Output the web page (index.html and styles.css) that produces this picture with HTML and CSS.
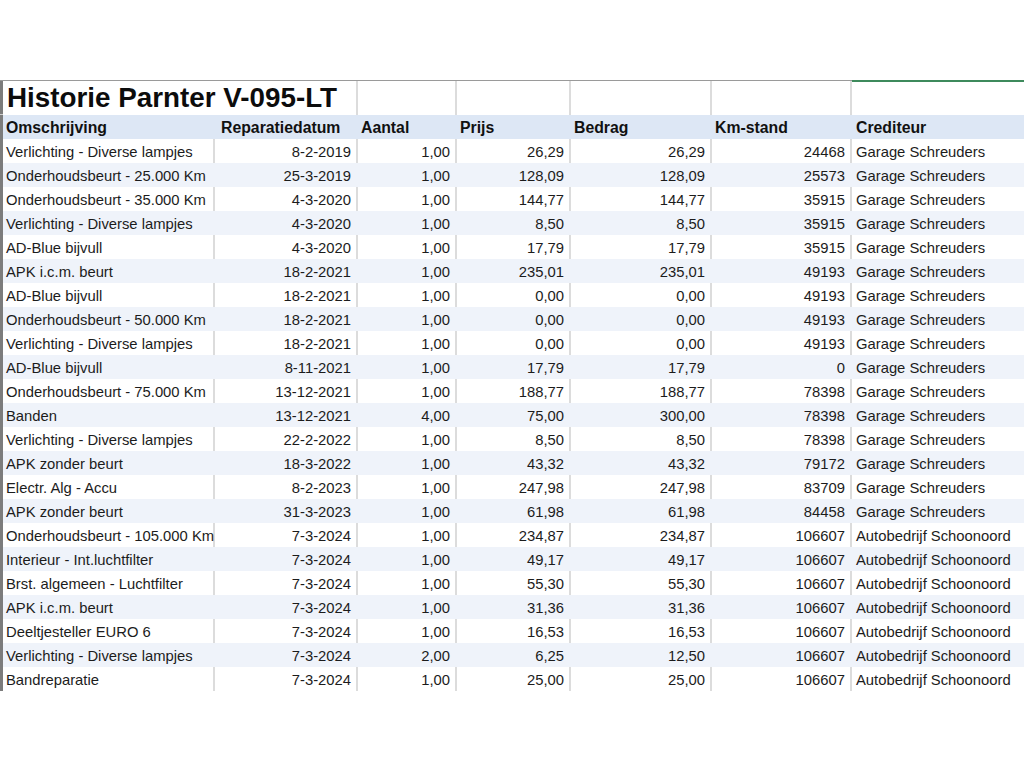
FILE: index.html
```html
<!DOCTYPE html>
<html lang="nl">
<head>
<meta charset="utf-8">
<title>Historie Parnter V-095-LT</title>
<link rel="stylesheet" href="styles.css">
</head>
<body>
<div class="sheet">
  <div class="row title-row">
    <div class="rh"></div>
    <div class="c title">Historie Parnter V-095-LT</div>
    <div class="c"></div><div class="c"></div><div class="c"></div><div class="c"></div><div class="c last"></div>
  </div>
  <div class="row head">
    <div class="rh"></div>
    <div class="c">Omschrijving</div>
    <div class="c hb">Reparatiedatum</div>
    <div class="c">Aantal</div>
    <div class="c">Prijs</div>
    <div class="c">Bedrag</div>
    <div class="c">Km-stand</div>
    <div class="c last">Crediteur</div>
  </div>
  <div class="row"><div class="rh"></div><div class="c">Verlichting - Diverse lampjes</div><div class="c n">8-2-2019</div><div class="c n">1,00</div><div class="c n">26,29</div><div class="c n">26,29</div><div class="c n">24468</div><div class="c last">Garage Schreuders</div></div>
  <div class="row alt"><div class="rh"></div><div class="c">Onderhoudsbeurt - 25.000 Km</div><div class="c n">25-3-2019</div><div class="c n">1,00</div><div class="c n">128,09</div><div class="c n">128,09</div><div class="c n">25573</div><div class="c last">Garage Schreuders</div></div>
  <div class="row"><div class="rh"></div><div class="c">Onderhoudsbeurt - 35.000 Km</div><div class="c n">4-3-2020</div><div class="c n">1,00</div><div class="c n">144,77</div><div class="c n">144,77</div><div class="c n">35915</div><div class="c last">Garage Schreuders</div></div>
  <div class="row alt"><div class="rh"></div><div class="c">Verlichting - Diverse lampjes</div><div class="c n">4-3-2020</div><div class="c n">1,00</div><div class="c n">8,50</div><div class="c n">8,50</div><div class="c n">35915</div><div class="c last">Garage Schreuders</div></div>
  <div class="row"><div class="rh"></div><div class="c">AD-Blue bijvull</div><div class="c n">4-3-2020</div><div class="c n">1,00</div><div class="c n">17,79</div><div class="c n">17,79</div><div class="c n">35915</div><div class="c last">Garage Schreuders</div></div>
  <div class="row alt"><div class="rh"></div><div class="c">APK i.c.m. beurt</div><div class="c n">18-2-2021</div><div class="c n">1,00</div><div class="c n">235,01</div><div class="c n">235,01</div><div class="c n">49193</div><div class="c last">Garage Schreuders</div></div>
  <div class="row"><div class="rh"></div><div class="c">AD-Blue bijvull</div><div class="c n">18-2-2021</div><div class="c n">1,00</div><div class="c n">0,00</div><div class="c n">0,00</div><div class="c n">49193</div><div class="c last">Garage Schreuders</div></div>
  <div class="row alt"><div class="rh"></div><div class="c">Onderhoudsbeurt - 50.000 Km</div><div class="c n">18-2-2021</div><div class="c n">1,00</div><div class="c n">0,00</div><div class="c n">0,00</div><div class="c n">49193</div><div class="c last">Garage Schreuders</div></div>
  <div class="row"><div class="rh"></div><div class="c">Verlichting - Diverse lampjes</div><div class="c n">18-2-2021</div><div class="c n">1,00</div><div class="c n">0,00</div><div class="c n">0,00</div><div class="c n">49193</div><div class="c last">Garage Schreuders</div></div>
  <div class="row alt"><div class="rh"></div><div class="c">AD-Blue bijvull</div><div class="c n">8-11-2021</div><div class="c n">1,00</div><div class="c n">17,79</div><div class="c n">17,79</div><div class="c n">0</div><div class="c last">Garage Schreuders</div></div>
  <div class="row"><div class="rh"></div><div class="c">Onderhoudsbeurt - 75.000 Km</div><div class="c n">13-12-2021</div><div class="c n">1,00</div><div class="c n">188,77</div><div class="c n">188,77</div><div class="c n">78398</div><div class="c last">Garage Schreuders</div></div>
  <div class="row alt"><div class="rh"></div><div class="c">Banden</div><div class="c n">13-12-2021</div><div class="c n">4,00</div><div class="c n">75,00</div><div class="c n">300,00</div><div class="c n">78398</div><div class="c last">Garage Schreuders</div></div>
  <div class="row"><div class="rh"></div><div class="c">Verlichting - Diverse lampjes</div><div class="c n">22-2-2022</div><div class="c n">1,00</div><div class="c n">8,50</div><div class="c n">8,50</div><div class="c n">78398</div><div class="c last">Garage Schreuders</div></div>
  <div class="row alt"><div class="rh"></div><div class="c">APK zonder beurt</div><div class="c n">18-3-2022</div><div class="c n">1,00</div><div class="c n">43,32</div><div class="c n">43,32</div><div class="c n">79172</div><div class="c last">Garage Schreuders</div></div>
  <div class="row"><div class="rh"></div><div class="c">Electr. Alg - Accu</div><div class="c n">8-2-2023</div><div class="c n">1,00</div><div class="c n">247,98</div><div class="c n">247,98</div><div class="c n">83709</div><div class="c last">Garage Schreuders</div></div>
  <div class="row alt"><div class="rh"></div><div class="c">APK zonder beurt</div><div class="c n">31-3-2023</div><div class="c n">1,00</div><div class="c n">61,98</div><div class="c n">61,98</div><div class="c n">84458</div><div class="c last">Garage Schreuders</div></div>
  <div class="row"><div class="rh"></div><div class="c">Onderhoudsbeurt - 105.000 Km</div><div class="c n">7-3-2024</div><div class="c n">1,00</div><div class="c n">234,87</div><div class="c n">234,87</div><div class="c n">106607</div><div class="c last">Autobedrijf Schoonoord</div></div>
  <div class="row alt"><div class="rh"></div><div class="c">Interieur - Int.luchtfilter</div><div class="c n">7-3-2024</div><div class="c n">1,00</div><div class="c n">49,17</div><div class="c n">49,17</div><div class="c n">106607</div><div class="c last">Autobedrijf Schoonoord</div></div>
  <div class="row"><div class="rh"></div><div class="c">Brst. algemeen - Luchtfilter</div><div class="c n">7-3-2024</div><div class="c n">1,00</div><div class="c n">55,30</div><div class="c n">55,30</div><div class="c n">106607</div><div class="c last">Autobedrijf Schoonoord</div></div>
  <div class="row alt"><div class="rh"></div><div class="c">APK i.c.m. beurt</div><div class="c n">7-3-2024</div><div class="c n">1,00</div><div class="c n">31,36</div><div class="c n">31,36</div><div class="c n">106607</div><div class="c last">Autobedrijf Schoonoord</div></div>
  <div class="row"><div class="rh"></div><div class="c">Deeltjesteller EURO 6</div><div class="c n">7-3-2024</div><div class="c n">1,00</div><div class="c n">16,53</div><div class="c n">16,53</div><div class="c n">106607</div><div class="c last">Autobedrijf Schoonoord</div></div>
  <div class="row alt"><div class="rh"></div><div class="c">Verlichting - Diverse lampjes</div><div class="c n">7-3-2024</div><div class="c n">2,00</div><div class="c n">6,25</div><div class="c n">12,50</div><div class="c n">106607</div><div class="c last">Autobedrijf Schoonoord</div></div>
  <div class="row"><div class="rh"></div><div class="c">Bandreparatie</div><div class="c n">7-3-2024</div><div class="c n">1,00</div><div class="c n">25,00</div><div class="c n">25,00</div><div class="c n">106607</div><div class="c last">Autobedrijf Schoonoord</div></div>
</div>
</body>
</html>
```

FILE: styles.css
```css
html, body {
  margin: 0;
  padding: 0;
  background: #ffffff;
}

body {
  font-family: "Liberation Sans", Arial, sans-serif;
  color: #1c1c1c;
  overflow: hidden;
}

.sheet {
  margin-top: 80px;
  width: 1024px;
  border-top: 1px solid #9a9a9a;
  position: relative;
}

.sheet::after {
  content: "";
  position: absolute;
  left: 852px;
  right: 0;
  top: -1px;
  height: 2px;
  background: #3e8a5c;
}

.row {
  display: grid;
  grid-template-columns: 3px 212px 143px 99px 114px 141px 140px 172px;
  height: 24px;
  line-height: 24px;
  font-size: 14.8px;
  background: #ffffff;
}

.rh {
  background: #7c7c7c;
  border-bottom: 1px solid #cfcfcf;
  box-sizing: border-box;
}

.c {
  box-sizing: border-box;
  border-right: 2px solid #dcdcdc;
  padding: 1px 4px 0 3px;
  white-space: nowrap;
  overflow: visible;
  min-width: 0;
}

.c.last {
  border-right: none;
  padding-left: 4px;
}

.c.n {
  text-align: right;
  padding-right: 5px;
}

.alt {
  background: #eff3fa;
}

.alt .c {
  border-right-color: #eff3fa;
}

.title-row {
  height: 34px;
  line-height: 34px;
}

.title-row .c {
  padding-top: 0;
}

.title-row .c.title {
  grid-column: span 2;
  font-size: 27.8px;
  font-weight: bold;
  color: #0c0c0c;
  padding-left: 4px;
}

.head {
  background: #dde7f5;
  font-size: 15.8px;
  font-weight: bold;
  color: #111111;
}

.head .c {
  border-right-color: #dde7f5;
}

.head .c.hb {
  padding-left: 6px;
}
```
